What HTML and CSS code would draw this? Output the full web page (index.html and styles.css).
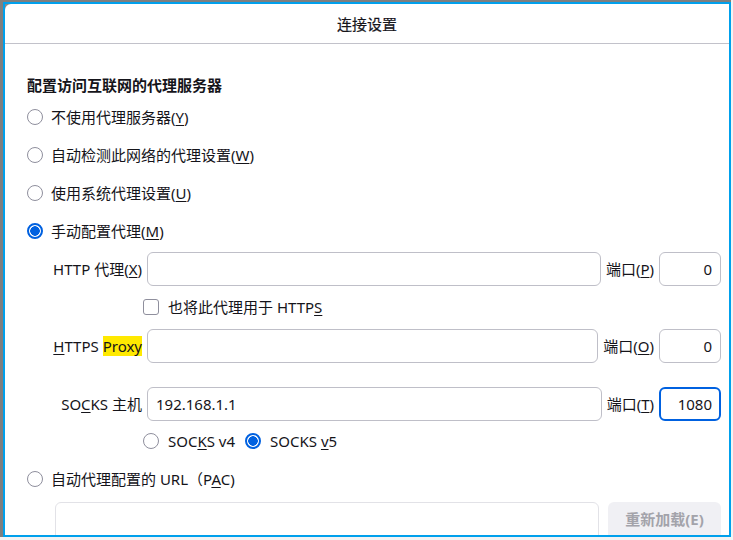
FILE: index.html
```html
<!DOCTYPE html>
<html lang="zh-CN">
<head>
    <meta charset="UTF-8">
    <meta name="viewport" content="width=device-width, initial-scale=1.0">
    <link rel="stylesheet" href="styles.css">
    <title>连接设置</title>
</head>
<body>
    <div class="page">
    <div class="screen">
        <div class="dialog">
            <section class="panel">
                <header class="dialog-header">
                    <h1>连接设置</h1>
                </header>
                <main class="dialog-content">
                    <h2 class="section-title">配置访问互联网的代理服务器</h2>

                    <label class="option">
                        <input type="radio" name="mode">
                        <span>不使用代理服务器(<u>Y</u>)</span>
                    </label>
                    <label class="option">
                        <input type="radio" name="mode">
                        <span>自动检测此网络的代理设置(<u>W</u>)</span>
                    </label>
                    <label class="option">
                        <input type="radio" name="mode">
                        <span>使用系统代理设置(<u>U</u>)</span>
                    </label>
                    <label class="option">
                        <input type="radio" name="mode" checked>
                        <span>手动配置代理(<u>M</u>)</span>
                    </label>

                    <div class="proxy-row">
                        <label class="proxy-label">HTTP 代理(<u>X</u>)</label>
                        <input class="field" type="text">
                        <label class="port-label">端口(<u>P</u>)</label>
                        <input class="field port" type="text" value="0">
                    </div>

                    <label class="sub-option check-row">
                        <input type="checkbox">
                        <span>也将此代理用于 HTTP<u>S</u></span>
                    </label>

                    <div class="proxy-row">
                        <label class="proxy-label"><u>H</u>TTPS <mark>Proxy</mark></label>
                        <input class="field" type="text">
                        <label class="port-label">端口(<u>O</u>)</label>
                        <input class="field port" type="text" value="0">
                    </div>

                    <div class="proxy-row socks">
                        <label class="proxy-label">SO<u>C</u>KS 主机</label>
                        <input class="field" type="text" value="192.168.1.1">
                        <label class="port-label">端口(<u>T</u>)</label>
                        <input class="field port focused" type="text" value="1080">
                    </div>

                    <div class="sub-option versions">
                        <label class="option-inline">
                            <input type="radio" name="socks">
                            <span>SOC<u>K</u>S v4</span>
                        </label>
                        <label class="option-inline">
                            <input type="radio" name="socks" checked>
                            <span>SOCKS <u>v</u>5</span>
                        </label>
                    </div>

                    <label class="option">
                        <input type="radio" name="mode">
                        <span>自动代理配置的 URL（P<u>A</u>C)</span>
                    </label>

                    <div class="pac-row">
                        <input class="field disabled" type="text" disabled>
                        <button class="btn" disabled>重新加载(E)</button>
                    </div>
                </main>
            </section>
        </div>
    </div>
    </div>
</body>
</html>
```

FILE: styles.css
```css
html{
    box-sizing: border-box;
    font-family: "Noto Sans", "Noto Sans CJK SC", sans-serif;
    font-size: 15px;
}
*,
*:before,
*:after{
    box-sizing: inherit;
}
body{
    margin: 0;
    background-color: #fff;
    color: #15141a;
    line-height: 20px;
}
u{
    text-underline-offset: 2px;
}
.page{
    width: 733px;
    height: 540px;
    background-color: #f3f3f3;
}
.screen{
    width: 731px;
    height: 537px;
    padding: 2px 0 0 3px;
    background-color: #7f7f7f;
}
.dialog{
    height: 100%;
    border: 2px solid #00a0ec;
    background-color: #8a8a8a;
}
.panel{
    height: 100%;
    background-color: #fff;
    border-top-left-radius: 6px;
    overflow: hidden;
}
.dialog-header{
    height: 40px;
    border-bottom: 1px solid #c2c2ca;
    display: flex;
    align-items: center;
    justify-content: center;
}
.dialog-header h1{
    margin: 0;
    font-size: 15px;
    font-weight: normal;
    -webkit-text-stroke: 0.2px #15141a;
}
.dialog-content{
    padding: 31px 8px 0 22px;
}
.section-title{
    margin: 0 0 3px;
    font-size: 15px;
    font-weight: bold;
    height: 20px;
}

/* radios and checkboxes */
input[type="radio"],
input[type="checkbox"]{
    appearance: none;
    margin: 0;
    width: 16px;
    height: 16px;
    flex-shrink: 0;
    border: 1px solid #8f8f9d;
    background-color: #fff;
}
input[type="radio"]{
    border-radius: 50%;
}
input[type="radio"]:checked{
    border: 2px solid #0061e0;
    background: radial-gradient(circle, #0061e0 0 4.5px, #fff 5px);
}
input[type="checkbox"]{
    border-radius: 3px;
}
.option{
    display: flex;
    align-items: center;
    gap: 8px;
    height: 38px;
}
.sub-option{
    display: flex;
    align-items: center;
    margin-left: 116px;
}
.check-row{
    gap: 9px;
    height: 41px;
    padding-top: 1px;
}
.versions{
    height: 39px;
    gap: 10px;
}
.option-inline{
    display: flex;
    align-items: center;
    gap: 9px;
}

/* proxy host + port rows */
.proxy-row{
    display: flex;
    align-items: center;
    height: 34px;
    margin-top: 2px;
}
.proxy-row.socks{
    margin-top: 24px;
}
.proxy-label{
    width: 120px;
    padding-right: 5px;
    text-align: right;
    white-space: nowrap;
}
.proxy-label mark{
    background-color: #ffe900;
    color: inherit;
}
.port-label{
    margin: 0 5px;
    white-space: nowrap;
}
.field{
    flex: 1;
    min-width: 0;
    height: 34px;
    padding: 0 8px;
    border: 1px solid #bfbfc8;
    border-radius: 6px;
    font: inherit;
    color: #15141a;
    background-color: #fff;
    outline: none;
}
.field.port{
    flex: 0 0 62px;
    text-align: right;
}
.field.focused{
    border: 2px solid #0061e0;
    padding: 0 7px;
}
.field.disabled{
    border-color: #e2e2e7;
}
.pac-row{
    display: flex;
    gap: 9px;
    margin: 4px 0 0 28px;
}
.pac-row .field{
    height: 40px;
}
.btn{
    width: 113px;
    height: 40px;
    border: none;
    border-radius: 6px;
    background-color: #f0f0f4;
    color: #a3a3aa;
    font: inherit;
    font-weight: bold;
    padding: 0 0 6px;
}
```
